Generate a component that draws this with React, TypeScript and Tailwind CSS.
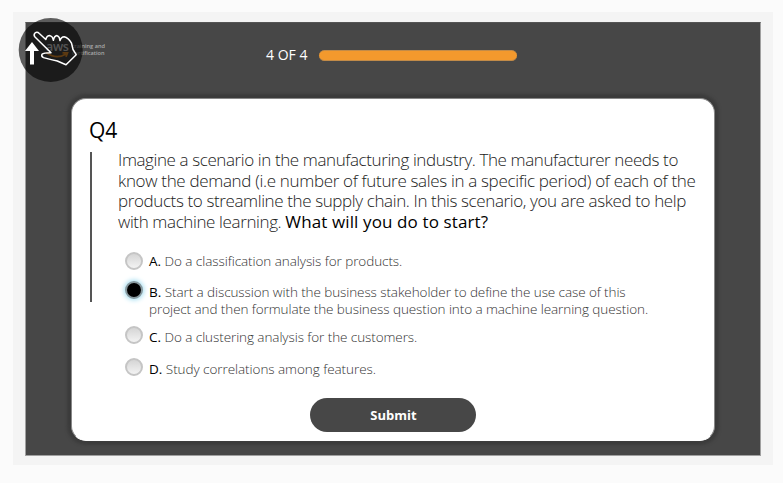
import { useState } from "react";

type Line = { text: string; spacing: string };
type Option = { letter: string; gap: string; dot: string; lines: Line[] };

const question: Line[] = [
  { text: "Imagine a scenario in the manufacturing industry. The manufacturer needs to", spacing: "tracking-[-0.4px]" },
  { text: "know the demand (i.e number of future sales in a specific period) of each of the", spacing: "tracking-[-0.33px]" },
  { text: "products to streamline the supply chain. In this scenario, you are asked to help", spacing: "tracking-[-0.385px]" },
  { text: "with machine learning. ", spacing: "tracking-[-0.38px]" },
];

const options: Option[] = [
  { letter: "A.", gap: "h-[31px]", dot: "mt-[-1px]", lines: [{ text: "Do a classification analysis for products.", spacing: "tracking-[-0.07px]" }] },
  {
    letter: "B.",
    gap: "h-[45px]",
    dot: "mt-[-3px]",
    lines: [
      { text: "Start a discussion with the business stakeholder to define the use case of this", spacing: "tracking-[-0.09px]" },
      { text: "project and then formulate the business question into a machine learning question.", spacing: "tracking-[-0.08px]" },
    ],
  },
  { letter: "C.", gap: "h-[32px]", dot: "mt-[-3px]", lines: [{ text: "Do a clustering analysis for the customers.", spacing: "tracking-[-0.08px]" }] },
  { letter: "D.", gap: "h-[37px]", dot: "mt-[-3px]", lines: [{ text: "Study correlations among features.", spacing: "tracking-[-0.06px]" }] },
];

function Radio({ checked }: { checked: boolean }) {
  return checked ? (
    <span className="block size-[18px] rounded-full border-2 border-[#88999f] bg-black shadow-[0_0_5px_1px_#9fdcf0]" />
  ) : (
    <span className="block size-[18px] rounded-full border-2 border-[#c5c5c5] bg-linear-to-b from-[#d5d5d5] to-[#f3f3f3]" />
  );
}

function Logo() {
  return (
    <div className="absolute left-[46px] top-[41px] flex h-[19px] w-[60px] items-start">
      <div className="h-[18px] w-[26px] shrink-0">
        <div className="h-[10px] text-[12.5px] leading-[11px] font-semibold tracking-[-0.3px] text-[#ddd]">aws</div>
        <svg className="block" width="23" height="8" viewBox="0 0 23 8" fill="none" stroke="#f59a2e" strokeWidth="1.8">
          <path d="M0 1.5 Q10 9 20 3M16.5 1.8h5l-1.5 4" />
        </svg>
      </div>
      <div className="mt-[2px] text-[5.6px] leading-[7px] font-semibold whitespace-nowrap text-[#aaa]">
        <div>training and</div>
        <div>certification</div>
      </div>
    </div>
  );
}

function PointerBadge() {
  return (
    <svg className="absolute left-[18px] top-[17px]" width="66" height="66" viewBox="18 17 66 66">
      <circle cx="50.7" cy="50" r="32" fill="#000" fillOpacity="0.62" />
      <path d="M32 42l7 9h-5v13.5h-4V51h-5z" fill="#fff" />
      <path
        d="M51 52.8L35 37Q33.2 34.8 35 33Q37.2 31.4 39.3 33.5L45.8 39.5Q46.8 35.6 50 35.6Q52.8 36.4 53.4 40.3Q54.2 36 57 35.6Q59.8 36.6 60 40.6Q61 36.8 64.2 36.7Q68.5 37.6 71.5 43.2L73 49.5L76.2 54.7L66 64.8L57.3 61Q50 59.5 43.5 57.6Q41 56.4 42 54.3Q43.5 52.8 51 52.8Z"
        fill="none"
        stroke="#fff"
        strokeWidth="1.5"
        strokeLinejoin="round"
      />
    </svg>
  );
}

export default function App() {
  const [selected, setSelected] = useState("B.");
  return (
    <main className="relative h-[483px] w-[783px] overflow-hidden bg-[#fbfbfb] pt-[12px] pl-[13px] font-['Open_Sans','Noto_Sans',sans-serif]">
      <div className="h-[453px] w-[760px] bg-[#f4f4f4] pt-[10px] pl-[12px]">
        <div className="h-[434px] w-[736px] border border-t-[#555] border-r-[#a0a0a0] border-b-[#a0a0a0] border-l-[#a0a0a0] bg-[#474747]">
          <header className="flex h-[75px] items-center pb-[11px] pl-[240px]">
            <span className="w-[53px] text-[14px] leading-[18px] whitespace-nowrap text-white">4 OF 4</span>
            <div className="h-[11px] w-[198px] rounded-full border-y border-[#c28b48] bg-[#f3992d]" />
          </header>
          <section className="ml-[45px] h-[343px] w-[644px] rounded-[15px] border border-[#888] border-b-white bg-white pt-[18px] pl-[18px] shadow-[0_0_3px_4px_#3c3c3c]">
            <h1 className="-ml-px h-[35px] text-[21px] leading-[27px] text-black">Q4</h1>
            <div className="flex">
              <div className="h-[150px] w-[2px] shrink-0 bg-[#555]" />
              <div className="ml-[26px] shrink-0">
                <div className="mt-[-2px] h-[103px] text-[17px] leading-[20.6px] font-light text-[#222]">
                  {question.map((l, i) => (
                    <div key={l.text} className="whitespace-pre">
                      <span className={l.spacing}>{l.text}</span>
                      {i === 3 && <span className="font-normal tracking-[0.12px] text-black">What will you do to start?</span>}
                    </div>
                  ))}
                </div>
                <div className="pl-[7px]">
                  {options.map((o) => (
                    <button key={o.letter} onClick={() => setSelected(o.letter)} className={`${o.gap} flex items-start text-left`}>
                      <span className={o.dot}><Radio checked={selected === o.letter} /></span>
                      <span className="ml-[6px] block text-[13.5px] leading-[17px] font-light text-[#333]">
                        {o.lines.map((l, i) => (
                          <span key={l.text} className="block whitespace-pre">
                            {i === 0 && <span className="font-normal text-black">{o.letter} </span>}
                            <span className={l.spacing}>{l.text}</span>
                          </span>
                        ))}
                      </span>
                    </button>
                  ))}
                </div>
              </div>
            </div>
            <button className="ml-[220px] block h-[34px] w-[166px] rounded-full bg-[#474747] pt-[2px] pl-[1px] text-[13px] font-bold text-white">Submit</button>
          </section>
        </div>
      </div>
      <Logo />
      <PointerBadge />
    </main>
  );
}
